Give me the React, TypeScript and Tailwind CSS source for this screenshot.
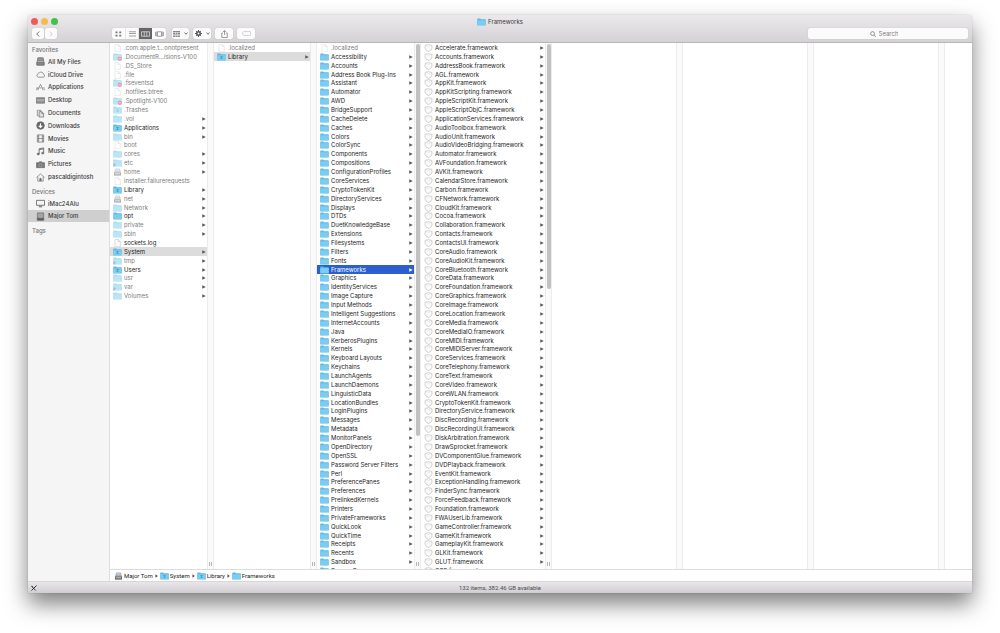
import { useState } from "react";
import clsx from "clsx";

type IconKind =
  | "doc"
  | "folder"
  | "locked"
  | "alias"
  | "badged"
  | "drive"
  | "framework";

interface Entry {
  name: string;
  icon: IconKind;
  dim?: boolean;
  leaf?: boolean;
}

const ROOT: Entry[] = [
  { name: ".com.apple.t…onotpresent", icon: "doc", dim: true, leaf: true },
  { name: ".DocumentR…isions-V100", icon: "locked", dim: true, leaf: true },
  { name: ".DS_Store", icon: "doc", dim: true, leaf: true },
  { name: ".file", icon: "doc", dim: true, leaf: true },
  { name: ".fseventsd", icon: "locked", dim: true, leaf: true },
  { name: ".hotfiles.btree", icon: "doc", dim: true, leaf: true },
  { name: ".Spotlight-V100", icon: "locked", dim: true, leaf: true },
  { name: ".Trashes", icon: "badged", dim: true, leaf: true },
  { name: ".vol", icon: "folder", dim: true },
  { name: "Applications", icon: "badged" },
  { name: "bin", icon: "folder", dim: true },
  { name: "boot", icon: "doc", dim: true, leaf: true },
  { name: "cores", icon: "folder", dim: true },
  { name: "etc", icon: "alias", dim: true },
  { name: "home", icon: "drive", dim: true },
  { name: "installer.failurerequests", icon: "doc", dim: true, leaf: true },
  { name: "Library", icon: "badged" },
  { name: "net", icon: "drive", dim: true },
  { name: "Network", icon: "folder", dim: true },
  { name: "opt", icon: "folder" },
  { name: "private", icon: "folder", dim: true },
  { name: "sbin", icon: "folder", dim: true },
  { name: "sockets.log", icon: "doc", leaf: true },
  { name: "System", icon: "badged" },
  { name: "tmp", icon: "alias", dim: true },
  { name: "Users", icon: "badged" },
  { name: "usr", icon: "folder", dim: true },
  { name: "var", icon: "alias", dim: true },
  { name: "Volumes", icon: "folder", dim: true },
];

const SYSTEM: Entry[] = [
  { name: ".localized", icon: "doc", dim: true, leaf: true },
  { name: "Library", icon: "badged" },
];

const LIBRARY: Entry[] = [
  { name: ".localized", icon: "doc", dim: true, leaf: true },
  ...[
    "Accessibility", "Accounts", "Address Book Plug-Ins", "Assistant",
    "Automator", "AWD", "BridgeSupport", "CacheDelete", "Caches", "Colors",
    "ColorSync", "Components", "Compositions", "ConfigurationProfiles",
    "CoreServices", "CryptoTokenKit", "DirectoryServices", "Displays", "DTDs",
    "DuetKnowledgeBase", "Extensions", "Filesystems", "Filters", "Fonts",
    "Frameworks", "Graphics", "IdentityServices", "Image Capture",
    "Input Methods", "Intelligent Suggestions", "InternetAccounts", "Java",
    "KerberosPlugins", "Kernels", "Keyboard Layouts", "Keychains",
    "LaunchAgents", "LaunchDaemons", "LinguisticData", "LocationBundles",
    "LoginPlugins", "Messages", "Metadata", "MonitorPanels", "OpenDirectory",
    "OpenSSL", "Password Server Filters", "Perl", "PreferencePanes",
    "Preferences", "PrelinkedKernels", "Printers", "PrivateFrameworks",
    "QuickLook", "QuickTime", "Receipts", "Recents", "Sandbox",
    "Screen Savers",
  ].map((name): Entry => ({ name, icon: "folder" })),
];

const FRAMEWORKS: Entry[] = [
  "Accelerate", "Accounts", "AddressBook", "AGL", "AppKit", "AppKitScripting",
  "AppleScriptKit", "AppleScriptObjC", "ApplicationServices", "AudioToolbox",
  "AudioUnit", "AudioVideoBridging", "Automator", "AVFoundation", "AVKit",
  "CalendarStore", "Carbon", "CFNetwork", "CloudKit", "Cocoa",
  "Collaboration", "Contacts", "ContactsUI", "CoreAudio", "CoreAudioKit",
  "CoreBluetooth", "CoreData", "CoreFoundation", "CoreGraphics", "CoreImage",
  "CoreLocation", "CoreMedia", "CoreMediaIO", "CoreMIDI", "CoreMIDIServer",
  "CoreServices", "CoreTelephony", "CoreText", "CoreVideo", "CoreWLAN",
  "CryptoTokenKit", "DirectoryService", "DiscRecording", "DiscRecordingUI",
  "DiskArbitration", "DrawSprocket", "DVComponentGlue", "DVDPlayback",
  "EventKit", "ExceptionHandling", "FinderSync", "ForceFeedback",
  "Foundation", "FWAUserLib", "GameController", "GameKit", "GameplayKit",
  "GLKit", "GLUT", "GSS",
].map((name): Entry => ({ name: `${name}.framework`, icon: "framework" }));

const FileIcon = ({ kind }: { kind: IconKind }) => {
  if (kind === "doc") {
    return (
      <svg viewBox="0 0 18 16" className="w-[9px] h-2 shrink-0">
        <path d="M4 .5h6l4.500 4.500v10.500h-10.500z" fill="#fff" stroke="#b4b4b4" />
        <path d="M10 .5v4.500h4.500" fill="#eee" stroke="#b4b4b4" />
      </svg>
    );
  }
  if (kind === "drive") {
    return (
      <svg viewBox="0 0 18 16" className="w-[9px] h-2 shrink-0">
        <path d="M4.500 1h9l2.500 8v6h-14v-6z" fill="#a9adb2" />
        <path d="M2 9h14v6h-14z" fill="#64686d" />
        <path d="M4 11.500h10M5.500 4h7" stroke="#e4e6e8" strokeWidth="1.500" />
      </svg>
    );
  }
  if (kind === "framework") {
    return (
      <svg viewBox="0 0 18 16" className="w-[9px] h-2 shrink-0">
        <path
          d="M9 .8l2.500 1.200 4 .5.5 4.500c0 4-3 6.500-7 8-4-1.500-7-4-7-8l.5-4.500 4-.5z"
          fill="#fafafa"
          stroke="#b4b4b4"
          strokeWidth="1.200"
        />
        <path d="M6 6c2-1.500 4-1.500 6 0" fill="none" stroke="#dedede" />
      </svg>
    );
  }
  return (
    <svg viewBox="0 0 18 16" className="w-[9px] h-2 shrink-0">
      <path d="M.5 2q0-1 1-1h5l1.500 1.500h8.500q1 0 1 1v11h-17z" fill="#5fb8e2" />
      <path d="M.5 4.500h17v9.500q0 1-1 1h-15q-1 0-1-1z" fill="#7accf0" />
      {kind === "badged" && (
        <path d="M6.500 7h5M9 6.500v5M7 12l2-3 2 3" fill="none" stroke="#3f9dcc" strokeWidth="1.500" />
      )}
      {kind === "locked" && (
        <>
          <circle cx="13.500" cy="11.500" r="4" fill="#d8242c" />
          <path d="M11.500 11.500h4" stroke="#fff" strokeWidth="1.500" />
        </>
      )}
      {kind === "alias" && (
        <path d="M1.500 15v-5h4M2 14.500l3.500-4" fill="none" stroke="#35566a" strokeWidth="1.300" />
      )}
    </svg>
  );
};

const Column = ({
  label,
  entries = [],
  selected,
  active,
  width = "w-[124px]",
  thumb,
  handle,
}: {
  label: string;
  entries?: Entry[];
  selected?: string;
  active?: boolean;
  width?: string;
  thumb?: string;
  handle?: boolean;
}) => {
  const [current, setCurrent] = useState(selected);

  return (
    <>
      <ul
        aria-label={label}
        className={clsx(
          "shrink-0 grid h-[532px] grid-rows-[repeat(60,minmax(0,1fr))]",
          width
        )}
      >
        {entries.map((entry) => {
          const isCurrent = entry.name === current;
          return (
            <li key={entry.name} className="flex min-h-0">
              <button
                onClick={() => setCurrent(entry.name)}
                className={clsx(
                  "flex w-full items-center gap-0.5 pt-px pl-[3px] pr-px text-left text-[6px] leading-[8px] whitespace-nowrap",
                  isCurrent && (active ? "bg-[#2b5fd0]" : "bg-[#dcdcdc]"),
                  entry.dim ? "text-[#7c7c7c]" : "text-[#1c1c1c]"
                )}
              >
                <span className={clsx("flex", entry.dim && "opacity-50")}>
                  <FileIcon kind={entry.icon} />
                </span>
                <span className={clsx("flex-1", isCurrent && active && "text-white")}>
                  {entry.name}
                </span>
                {!entry.leaf && (
                  <svg viewBox="0 0 8 8" className="w-1 h-1 shrink-0">
                    <path
                      d="M.5 .5l7 3.500-7 3.500z"
                      fill={isCurrent && active ? "#fff" : "#5a5a5a"}
                    />
                  </svg>
                )}
              </button>
            </li>
          );
        })}
      </ul>
      <div className="flex w-[7px] shrink-0 flex-col items-center justify-between border-x border-[#ececec] bg-[#fafafa] pt-px pb-[3px]">
        <div className={clsx("w-1 rounded-full", thumb && "bg-[#c1c1c1]", thumb)} />
        {handle && <div className="h-1 w-[3px] border-x border-[#b5b5b5]" />}
      </div>
    </>
  );
};

type Place =
  | "All My Files"
  | "iCloud Drive"
  | "Applications"
  | "Desktop"
  | "Documents"
  | "Downloads"
  | "Movies"
  | "Music"
  | "Pictures"
  | "pascaldigintosh"
  | "iMac24Alu"
  | "Major Tom";

const FAVORITES: Place[] = [
  "All My Files", "iCloud Drive", "Applications", "Desktop", "Documents",
  "Downloads", "Movies", "Music", "Pictures", "pascaldigintosh",
];

const DEVICES: Place[] = ["iMac24Alu", "Major Tom"];

const PLACE_ICONS: Record<Place, React.ReactNode> = {
  "All My Files": (
    <>
      <path d="M4 2h12l2 11v5H2v-5z" fill="#bbb" />
      <path d="M4 2h12M3.500 5h13M3 8h14" />
      <path d="M2 12h16v6H2z" fill="#888" />
    </>
  ),
  "iCloud Drive": (
    <path d="M5 16a4 4 0 0 1-.5-7.500A3 3 0 0 1 8 6a5 5 0 0 1 8.500 3.500A3.300 3.300 0 0 1 16 16z" />
  ),
  Applications: (
    <path d="M4 16L10 3l6 13M1 11h5M8.500 11h3M14 11h5M1 16l2-5M19 16l-1-3" />
  ),
  Desktop: (
    <>
      <path d="M1 4h18v12H1z" fill="#aaa" />
      <path d="M1 5h18M1 13.500h18" />
    </>
  ),
  Documents: (
    <>
      <path d="M3 3h8v3M3 3v12h3" />
      <path d="M7 6h6l4 4v8H7z" fill="#ddd" />
      <path d="M13 6v4h4" />
    </>
  ),
  Downloads: (
    <>
      <circle cx="10" cy="10" r="8.500" fill="#666" />
      <path d="M10 5v9M6 10.500l4 4 4-4" stroke="#fff" strokeWidth="2.500" />
    </>
  ),
  Movies: (
    <>
      <path d="M3 2h14v16H3z" />
      <path d="M6 2v16M14 2v16M6 10h8M3 6h3M3 10h3M3 14h3M14 6h3M14 10h3M14 14h3" />
    </>
  ),
  Music: (
    <>
      <path d="M7 15V4l10-2v11M7 6l10-2" strokeWidth="2" />
      <ellipse cx="5" cy="15.500" rx="2.500" ry="2" fill="#666" />
      <ellipse cx="15" cy="13.500" rx="2.500" ry="2" fill="#666" />
    </>
  ),
  Pictures: (
    <>
      <path d="M1 6h5l1.500-2h5L14 6h5v11H1z" fill="#777" />
      <circle cx="10" cy="11.500" r="3.500" stroke="#aaa" />
    </>
  ),
  pascaldigintosh: (
    <>
      <path d="M1 10l9-8 9 8M4 8.500V18h12V8.500" />
      <path d="M8.500 18v-6h3v6" fill="#777" />
    </>
  ),
  iMac24Alu: (
    <>
      <path d="M1 3h18v11H1z" strokeWidth="2" />
      <path d="M8 14v3h4v-3M6 17.500h8" />
    </>
  ),
  "Major Tom": (
    <>
      <path d="M3 2h14v16H3z" fill="#999" />
      <path d="M3 14h14v4H3z" fill="#555" />
      <circle cx="10" cy="8" r="3.500" stroke="#bbb" />
    </>
  ),
};

const SidebarSection = ({
  title,
  places,
  current,
  onSelect,
  className,
}: {
  title: string;
  places: Place[];
  current: Place;
  onSelect: (place: Place) => void;
  className?: string;
}) => (
  <section>
    <h2 className="px-1 pt-px text-[6px] leading-[10px] font-medium text-[#757575]">
      {title}
    </h2>
    <ul className={clsx("grid auto-rows-fr", className)}>
      {places.map((place) => (
        <li key={place} className="flex min-h-0">
          <button
            onClick={() => onSelect(place)}
            className={clsx(
              "flex w-full items-center gap-[3px] pt-px pl-2 text-left text-[6px] leading-[8px] font-medium text-[#3c3c3c]",
              place === current && "bg-[#cfcfcf]"
            )}
          >
            <svg
              viewBox="0 0 20 20"
              className="size-[9px] shrink-0"
              fill="none"
              stroke="#6c6c6c"
              strokeWidth="1.500"
            >
              {PLACE_ICONS[place]}
            </svg>
            {place}
          </button>
        </li>
      ))}
    </ul>
  </section>
);

const ToolButton = ({
  label,
  className,
  children,
}: {
  label: string;
  className?: string;
  children: React.ReactNode;
}) => (
  <button
    aria-label={label}
    className={clsx(
      "flex h-[11px] items-center justify-center gap-1 rounded-xs bg-[#fbfbfb] shadow-[0_0_1px_#aaa]",
      className
    )}
  >
    {children}
  </button>
);

const Caret = () => (
  <svg viewBox="0 0 8 6" className="w-1 h-[3px]" fill="none" stroke="#666" strokeWidth="1.800">
    <path d="M1 1l3 3.500 3-3.500" />
  </svg>
);

const Toolbar = () => (
  <header className="flex h-7 shrink-0 flex-col rounded-t-xs border-b border-[#b7b5b7] bg-linear-to-b from-[#ebe9eb] to-[#d4d2d4]">
    <div className="grid h-[13px] grid-cols-[1fr_auto_1fr] items-center px-[3px]">
      <div className="flex gap-[3px]">
        <button aria-label="Close" className="size-[7px] rounded-full bg-[#ee5b57]" />
        <button aria-label="Minimize" className="size-[7px] rounded-full bg-[#f3bd4c]" />
        <button aria-label="Zoom" className="size-[7px] rounded-full bg-[#42c04c]" />
      </div>
      <h1 className="flex items-center gap-0.5 text-[6px] leading-[8px] text-[#3a3a3a]">
        <FileIcon kind="folder" />
        Frameworks
      </h1>
    </div>
    <div className="flex items-center px-1">
      <nav className="flex gap-px">
        <ToolButton label="Back" className="w-3">
          <svg viewBox="0 0 8 12" className="w-1 h-1.5" fill="none" stroke="#555" strokeWidth="1.600">
            <path d="M6.500 1l-5 5 5 5" />
          </svg>
        </ToolButton>
        <ToolButton label="Forward" className="w-3">
          <svg viewBox="0 0 8 12" className="w-1 h-1.5" fill="none" stroke="#c4c4c4" strokeWidth="1.600">
            <path d="M1.500 1l5 5-5 5" />
          </svg>
        </ToolButton>
      </nav>
      <div className="ml-[55px] flex rounded-xs bg-[#fbfbfb] shadow-[0_0_1px_#aaa]">
        <button aria-label="Icon view" className="flex h-[11px] w-[13px] items-center justify-center">
          <svg viewBox="0 0 14 12" className="w-[7px] h-1.5" fill="#777">
            <path d="M1 1h4v3.500H1zM8.500 1h4v3.500h-4zM1 7.500h4V11H1zM8.500 7.500h4V11h-4z" />
          </svg>
        </button>
        <button aria-label="List view" className="flex h-[11px] w-[14px] items-center justify-center border-x border-[#e6e6e6]">
          <svg viewBox="0 0 14 12" className="w-[7px] h-1.5" stroke="#777" strokeWidth="1.400">
            <path d="M0 1.500h14M0 5h14M0 10h14" />
          </svg>
        </button>
        <button aria-label="Column view" className="flex h-[11px] w-[13px] items-center justify-center bg-[#656565]">
          <svg viewBox="0 0 18 12" className="w-[9px] h-1.5" fill="none" stroke="#e8e8e8" strokeWidth="1.400">
            <path d="M1 1.500h16v9H1zM6.500 1.500v9M11.500 1.500v9" />
          </svg>
        </button>
        <button aria-label="Cover Flow" className="flex h-[11px] w-[14px] items-center justify-center">
          <svg viewBox="0 0 18 12" className="w-[9px] h-1.5" fill="none" stroke="#777" strokeWidth="1.400">
            <path d="M5 1.500h8v9H5zM2.500 1v10M.5 2v8M15.500 1v10M17.500 2v8" />
          </svg>
        </button>
      </div>
      <ToolButton label="Arrange" className="ml-[6px] w-[17px]">
        <svg viewBox="0 0 14 12" className="w-[7px] h-1.5" fill="#888">
          <path d="M0 0h14v2H0zM0 3h4v3H0zM5 3h4v3H5zM10 3h4v3h-4zM0 7h14v1.500H0zM0 9.500h4V12H0zM5 9.500h4V12H5zM10 9.500h4V12h-4z" />
        </svg>
        <Caret />
      </ToolButton>
      <ToolButton label="Action" className="ml-1 w-[18px]">
        <svg viewBox="0 0 16 16" className="size-[7px]" fill="none" stroke="#555">
          <circle cx="8" cy="8" r="4" strokeWidth="3.500" />
          <path d="M8 0v3M8 13v3M0 8h3M13 8h3M2.300 2.300l2 2M11.700 11.700l2 2M13.700 2.300l-2 2M4.300 11.700l-2 2" strokeWidth="2.200" />
        </svg>
        <Caret />
      </ToolButton>
      <ToolButton label="Share" className="ml-1 w-[18px]">
        <svg viewBox="0 0 14 16" className="w-[7px] h-2" fill="none" stroke="#777" strokeWidth="1.400">
          <path d="M4 6H1.500v9h11V6H10M7 10V1.500M4 4l3-3 3 3" />
        </svg>
      </ToolButton>
      <ToolButton label="Tags" className="ml-1 w-[18px]">
        <svg viewBox="0 0 18 10" className="w-[9px] h-[5px]" fill="none" stroke="#c4c4c4" strokeWidth="1.400">
          <path d="M4 1h12q1 0 1 1v6q0 1-1 1H4L1 6.500v-3z" />
        </svg>
      </ToolButton>
      <label className="ml-auto flex h-[11px] w-[160px] items-center justify-center gap-[3px] rounded-xs bg-[#fbfbfb] pr-2 shadow-[0_0_1px_#aaa]">
        <svg viewBox="0 0 14 14" className="size-[6px]" fill="none" stroke="#777" strokeWidth="1.800">
          <circle cx="6" cy="6" r="4.500" />
          <path d="M9.500 9.500l4 4" />
        </svg>
        <input
          type="text"
          aria-label="Search"
          placeholder="Search"
          className="field-sizing-content text-[6px] leading-[8px] outline-none placeholder:text-[#7c7c7c]"
        />
      </label>
    </div>
  </header>
);

const PATH: { name: string; icon: IconKind }[] = [
  { name: "Major Tom", icon: "drive" },
  { name: "System", icon: "badged" },
  { name: "Library", icon: "badged" },
  { name: "Frameworks", icon: "folder" },
];

export default function App() {
  const [place, setPlace] = useState<Place>("Major Tom");

  return (
    <div className="flex h-screen flex-col overflow-hidden bg-white px-7 pt-[15px] pb-10 font-['Inter','Liberation_Sans',sans-serif]">
      <main className="flex min-h-0 flex-1 flex-col rounded-t-xs bg-white shadow-[0_11px_22px_rgba(0,0,0,0.5),0_0_1px_rgba(0,0,0,0.4)]">
        <Toolbar />
        <div className="flex min-h-0 flex-1">
          <aside className="flex w-[82px] shrink-0 flex-col gap-[3px] border-r border-[#dedede] bg-[#f5f5f5] pt-px">
            <SidebarSection
              title="Favorites"
              places={FAVORITES}
              current={place}
              onSelect={setPlace}
              className="h-32"
            />
            <SidebarSection
              title="Devices"
              places={DEVICES}
              current={place}
              onSelect={setPlace}
              className="h-[25px]"
            />
            <SidebarSection title="Tags" places={[]} current={place} onSelect={setPlace} />
          </aside>
          <div className="flex min-w-0 flex-1 flex-col">
            <div className="flex min-h-0 flex-1 overflow-hidden">
              <Column label="Major Tom" entries={ROOT} selected="System" width="w-[97px]" handle />
              <Column label="System" entries={SYSTEM} selected="Library" width="w-24" handle />
              <Column
                label="Library"
                entries={LIBRARY}
                selected="Frameworks"
                active
                width="w-[97px]"
                thumb="h-3/4"
                handle
              />
              <Column label="Frameworks" entries={FRAMEWORKS} thumb="h-[47%]" handle />
              <Column label="Empty column 1" />
              <Column label="Empty column 2" />
              <Column label="Empty column 3" />
            </div>
            {/* Path bar */}
            <nav className="flex h-3 shrink-0 items-center gap-0.5 border-t border-[#dcdcdc] px-1 pt-px font-[Roboto,'Liberation_Sans',sans-serif] text-[6px] leading-[8px] text-[#222]">
              {PATH.map((step, i) => (
                <div key={step.name} className="flex items-center gap-0.5">
                  {i > 0 && (
                    <svg viewBox="0 0 6 8" className="w-[3px] h-1">
                      <path d="M1 .5l4.500 3.500-4.500 3.500z" fill="#444" />
                    </svg>
                  )}
                  <a href="#" className="flex items-center gap-px">
                    <FileIcon kind={step.icon} />
                    {step.name}
                  </a>
                </div>
              ))}
            </nav>
          </div>
        </div>
        <footer className="grid h-3 shrink-0 grid-cols-[1fr_auto_1fr] items-center border-t border-[#d8d6d8] bg-linear-to-b from-[#e9e7ea] to-[#d0ced2] px-[3px] font-[Roboto,'Liberation_Sans',sans-serif] text-[6px] leading-[8px] text-[#4c4c4c]">
          <svg viewBox="0 0 12 12" className="size-[6px]" fill="none" stroke="#333" strokeWidth="2">
            <path d="M1 11L11 1M1.500 3l8 8M1 1.500l3 3" />
          </svg>
          <p>132 items, 382.46 GB available</p>
        </footer>
      </main>
    </div>
  );
}
